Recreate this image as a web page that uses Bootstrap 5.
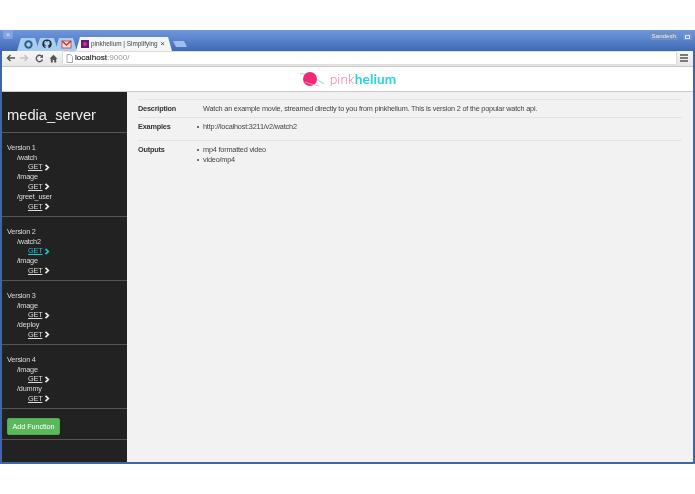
<!DOCTYPE html>
<html lang="en">
<head>
<meta charset="utf-8">
<title>pinkhelium</title>
<link href="https://cdn.jsdelivr.net/npm/bootstrap@5.3.0/dist/css/bootstrap.min.css" rel="stylesheet">
<style>
html,body{height:100%;background:#fff;overflow:hidden}
body{padding:30px 0;font-family:"Liberation Sans",Arial,sans-serif;font-size:7.3px;letter-spacing:-.19px;line-height:9.8px;color:#333}
.win{height:434px;border:solid #3f66a8;border-width:0 2px 2px 2px;background:#f2f2f2;filter:blur(.3px)}
.titlebar{height:21px;margin:0 -2px;background:linear-gradient(#6f97d8,#5c86cf 40%,#3f69b4);padding-left:3px;letter-spacing:0}
.winbtn{width:10px;height:9px;margin-top:0;background:#7fa3dc;border-radius:0 0 2px 2px;color:#dfe9f8;font-size:8px;line-height:9px;text-align:center}
.tabstrip{margin-left:4px;align-self:flex-end;height:15px}
.pin{width:22px;height:13px;margin-right:-3px;background:#a9cdf2;clip-path:polygon(0 100%,4px 0,calc(100% - 4px) 0,100% 100%)}
.acttab{width:96px;height:14px;margin-left:2px;padding:0 7px 0 5px;background:#f5f6f8;clip-path:polygon(0 100%,4px 0,calc(100% - 4px) 0,100% 100%);font-size:6.4px;color:#555;white-space:nowrap}
.favi{width:8px;height:8px;background:#5a1c7c;margin-right:2px}
.favi i{display:block;width:4px;height:4px;margin:2px;border-radius:50%;background:#f0267a}
.tabttl{overflow:hidden;flex:1;color:#444}
.tabx{font-size:8px;color:#444}
.newtab{width:14px;height:6px;margin-left:1px;margin-bottom:4px;background:#9dbfec;clip-path:polygon(0 0,calc(100% - 3px) 0,100% 100%,3px 100%)}
.userchip{height:8px;margin-top:2px;padding:0 2px;background:#6e8fc0;color:#e8eef8;font-size:6.2px;line-height:8px;border-radius:1px}
.maxbtn{width:9px;height:7px;margin:3px 3px 0 5px;background:#6f95d2;border-radius:1px;display:flex;align-items:center;justify-content:center}
.maxbtn i{display:block;width:5px;height:4px;border:1px solid #dce6f6}
.toolbar{height:16px;margin-top:0;background:linear-gradient(#f7f7f7,#e6e6e6);border-bottom:1px solid #c8c8c8;padding-left:1px;letter-spacing:0}
.tbi{width:14px;height:12px;margin-right:.5px;display:flex;align-items:center;justify-content:center}
.burger{margin-right:2px}
.omni{flex:1;height:14px;background:#fff;border:1px solid #dcdcdc;border-radius:1px;margin:0 0 0 1px;font-size:8.1px;line-height:12px;padding-left:3px}
.omni b{font-weight:400;color:#222;-webkit-text-stroke:.15px #222}.omni span{color:#999}
.docic{margin-right:2px}
.pagehead{height:25px;background:#fff;border-bottom:1px solid #ccc;padding-top:1px;letter-spacing:0}
.lgtxt{font-family:"Lato","Liberation Sans",sans-serif;font-size:13.7px;line-height:20px;color:#ef6fa6;margin-left:5px;font-weight:300;letter-spacing:.1px}
.lgtxt strong{font-weight:700;color:#2ad3e4}
.appbody{height:371px}
.sidenav{width:125px;background:#222;color:#ddd;flex:none;overflow:hidden}
.appname{height:41px;margin:0;padding-left:5px;font-size:14.7px;font-weight:400;letter-spacing:0;line-height:46px;color:#eee;font-family:"Liberation Sans",sans-serif;border-bottom:1px solid #555}
.verblock{padding:10px 5px 5px;border-bottom:1px solid #555;height:64px}
.verblock:first-of-type{height:84px}
.ep{padding-left:10px}
.meth{padding-left:21px;display:flex;align-items:center;gap:2px;height:9.8px}
.meth a{color:#ddd;text-decoration:underline}
.meth svg{display:block}
.meth.on a{color:#18c6d0}
.addwrap{height:31px;padding:9px 5px 0;border-bottom:1px solid #555}
.addbtn{--bs-btn-padding-x:0;--bs-btn-padding-y:0;--bs-btn-font-size:7.3px;--bs-btn-border-radius:2px;--bs-btn-bg:#5cb85c;--bs-btn-border-color:#4cae4c;--bs-btn-color:#fff;height:17px;line-height:15px;width:53px;white-space:nowrap;letter-spacing:-.1px}
.mainpane{padding:7px 11px 0;color:#444}
.drow{border-top:1px solid #e3e3e3;display:flex}
.dlabel{width:65px;font-weight:700;color:#333;flex:none}
.drow ul{margin:0;padding-left:0;list-style:none}
.drow li{position:relative}
.drow li::before{content:"";position:absolute;left:-6px;top:4px;width:2px;height:2px;border-radius:50%;background:#444}
.r1{height:18px;padding-top:4px}.r2{height:23px;padding-top:4px}.r3{padding-top:4px;height:40px}
</style>
</head>
<body>
<div class="win d-flex flex-column">
  <div class="titlebar d-flex">
    <div class="winbtn">×</div>
    <div class="tabstrip d-flex align-items-end">
      <div class="pin d-flex align-items-center justify-content-center"><svg width="9" height="9" viewBox="0 0 9 9"><circle cx="4.5" cy="4.5" r="3.2" fill="none" stroke="#2f5f7f" stroke-width="2"/></svg></div>
      <div class="pin d-flex align-items-center justify-content-center"><svg width="10" height="10" viewBox="0 0 10 10"><path d="M5 .5a4.5 4.5 0 0 0-1.5 8.8V7.6C2.5 7.8 2 7 1.8 6.6c.6 0 1 .5 1.7.6 0-.5.3-.8.5-.9C2.8 6 2.2 5.400 2.200 4.200c0-.5.2-1 .5-1.300 0-.3 0-.8.1-1.100.5 0 1 .3 1.300.5a4 4 0 0 1 1.800 0c.3-.2.800-.5 1.300-.5.1.3.1.8.1 1.100.3.3.5.8.500 1.300C7.800 5.400 7.200 6 6 6.300c.3.2.5.6.5 1.200v1.800A4.500 4.500 0 0 0 5 .5z" fill="#1f2b33"/></svg></div>
      <div class="pin d-flex align-items-center justify-content-center"><svg width="11" height="9" viewBox="0 0 11 9"><rect x="1" y="1" width="9" height="7" fill="#f4e4df" stroke="#c9554f"/><path d="M1 1l4.500 4L10 1" fill="none" stroke="#c9302c" stroke-width="1.500"/></svg></div>
      <div class="acttab d-flex align-items-center">
        <div class="favi flex-none"><i></i></div>
        <div class="tabttl">pinkhelium | Simplifying .</div>
        <span class="tabx">×</span>
      </div>
      <div class="newtab"></div>
    </div>
    <div class="ms-auto userchip">Sandesh</div>
    <div class="maxbtn"><i></i></div>
  </div>
  <div class="toolbar d-flex align-items-center">
    <div class="tbi"><svg width="9" height="8" viewBox="0 0 9 8"><path d="M9 4H2M4.500 1L1.500 4l3 3" fill="none" stroke="#555" stroke-width="1.500"/></svg></div>
    <div class="tbi"><svg width="9" height="8" viewBox="0 0 9 8"><path d="M0 4h7M4.500 1l3 3-3 3" fill="none" stroke="#c4c4c4" stroke-width="1.500"/></svg></div>
    <div class="tbi"><svg width="9" height="9" viewBox="0 0 9 9"><path d="M7.500 5.500A3.200 3.200 0 1 1 7 2.500" fill="none" stroke="#555" stroke-width="1.400"/><path d="M8 .5v3.200H4.800z" fill="#555"/></svg></div>
    <div class="tbi"><svg width="9" height="9" viewBox="0 0 9 9"><path d="M4.500 .8L.5 4.800h1.300V8.500h2V6h1.400v2.500h2V4.800h1.300z" fill="#555"/></svg></div>
    <div class="omni d-flex align-items-center">
      <svg class="docic" width="7" height="9" viewBox="0 0 7 9"><path d="M1 .5h3.500L6.500 2.500v6H1z" fill="#fff" stroke="#aaa"/></svg>
      <span><b>localhost</b>:9000/</span>
    </div>
    <div class="tbi burger"><svg width="8" height="8" viewBox="0 0 8 8"><path d="M0 1h8M0 4h8M0 7h8" stroke="#555" stroke-width="1.500"/></svg></div>
  </div>
  <div class="pagehead d-flex align-items-center justify-content-center">
    <svg width="26" height="16" viewBox="0 0 26 16">
      <path d="M1 3c6-2 18 6 24 10" fill="none" stroke="#a8e3dc" stroke-width="1.200"/>
      <circle cx="11" cy="8" r="7" fill="#f0287a"/>
      <path d="M6 11c5 2 10 3 14 4" fill="none" stroke="#f7a0c4" stroke-width=".8"/>
    </svg>
    <div class="lgtxt">pink<strong>helium</strong></div>
  </div>
  <div class="appbody d-flex">
    <aside class="sidenav">
      <h1 class="appname">media_server</h1>
      <div class="verblock">
        <div>Version 1</div>
        <div class="ep">/watch</div>
        <div class="meth"><a href="#">GET</a><svg width="6" height="7" viewBox="0 0 6 7"><path d="M1.500 .8L4.300 3.500 1.500 6.200" fill="none" stroke="#eee" stroke-width="1.700"/></svg></div>
        <div class="ep">/image</div>
        <div class="meth"><a href="#">GET</a><svg width="6" height="7" viewBox="0 0 6 7"><path d="M1.500 .8L4.300 3.500 1.500 6.200" fill="none" stroke="#eee" stroke-width="1.700"/></svg></div>
        <div class="ep">/greet_user</div>
        <div class="meth"><a href="#">GET</a><svg width="6" height="7" viewBox="0 0 6 7"><path d="M1.500 .8L4.300 3.500 1.500 6.200" fill="none" stroke="#eee" stroke-width="1.700"/></svg></div>
      </div>
      <div class="verblock">
        <div>Version 2</div>
        <div class="ep">/watch2</div>
        <div class="meth on"><a href="#">GET</a><svg width="6" height="7" viewBox="0 0 6 7"><path d="M1.500 .8L4.300 3.500 1.500 6.200" fill="none" stroke="#18c6d0" stroke-width="1.700"/></svg></div>
        <div class="ep">/image</div>
        <div class="meth"><a href="#">GET</a><svg width="6" height="7" viewBox="0 0 6 7"><path d="M1.500 .8L4.300 3.500 1.500 6.200" fill="none" stroke="#eee" stroke-width="1.700"/></svg></div>
      </div>
      <div class="verblock">
        <div>Version 3</div>
        <div class="ep">/image</div>
        <div class="meth"><a href="#">GET</a><svg width="6" height="7" viewBox="0 0 6 7"><path d="M1.500 .8L4.300 3.500 1.500 6.200" fill="none" stroke="#eee" stroke-width="1.700"/></svg></div>
        <div class="ep">/deploy</div>
        <div class="meth"><a href="#">GET</a><svg width="6" height="7" viewBox="0 0 6 7"><path d="M1.500 .8L4.300 3.500 1.500 6.200" fill="none" stroke="#eee" stroke-width="1.700"/></svg></div>
      </div>
      <div class="verblock">
        <div>Version 4</div>
        <div class="ep">/image</div>
        <div class="meth"><a href="#">GET</a><svg width="6" height="7" viewBox="0 0 6 7"><path d="M1.500 .8L4.300 3.500 1.500 6.200" fill="none" stroke="#eee" stroke-width="1.700"/></svg></div>
        <div class="ep">/dummy</div>
        <div class="meth"><a href="#">GET</a><svg width="6" height="7" viewBox="0 0 6 7"><path d="M1.500 .8L4.300 3.500 1.500 6.200" fill="none" stroke="#eee" stroke-width="1.700"/></svg></div>
      </div>
      <div class="addwrap"><button type="button" class="btn addbtn">Add Function</button></div>
    </aside>
    <main class="mainpane flex-grow-1">
      <div class="drow r1"><div class="dlabel">Description</div><div>Watch an example movie, streamed directly to you from pinkhelium. This is version 2 of the popular watch api.</div></div>
      <div class="drow r2"><div class="dlabel">Examples</div><ul><li>http://localhost:3211/v2/watch2</li></ul></div>
      <div class="drow r3"><div class="dlabel">Outputs</div><ul><li>mp4 formatted video</li><li>video/mp4</li></ul></div>
    </main>
  </div>
</div>
<script src="https://cdn.jsdelivr.net/npm/bootstrap@5.3.0/dist/js/bootstrap.bundle.min.js"></script>
</body>
</html>
